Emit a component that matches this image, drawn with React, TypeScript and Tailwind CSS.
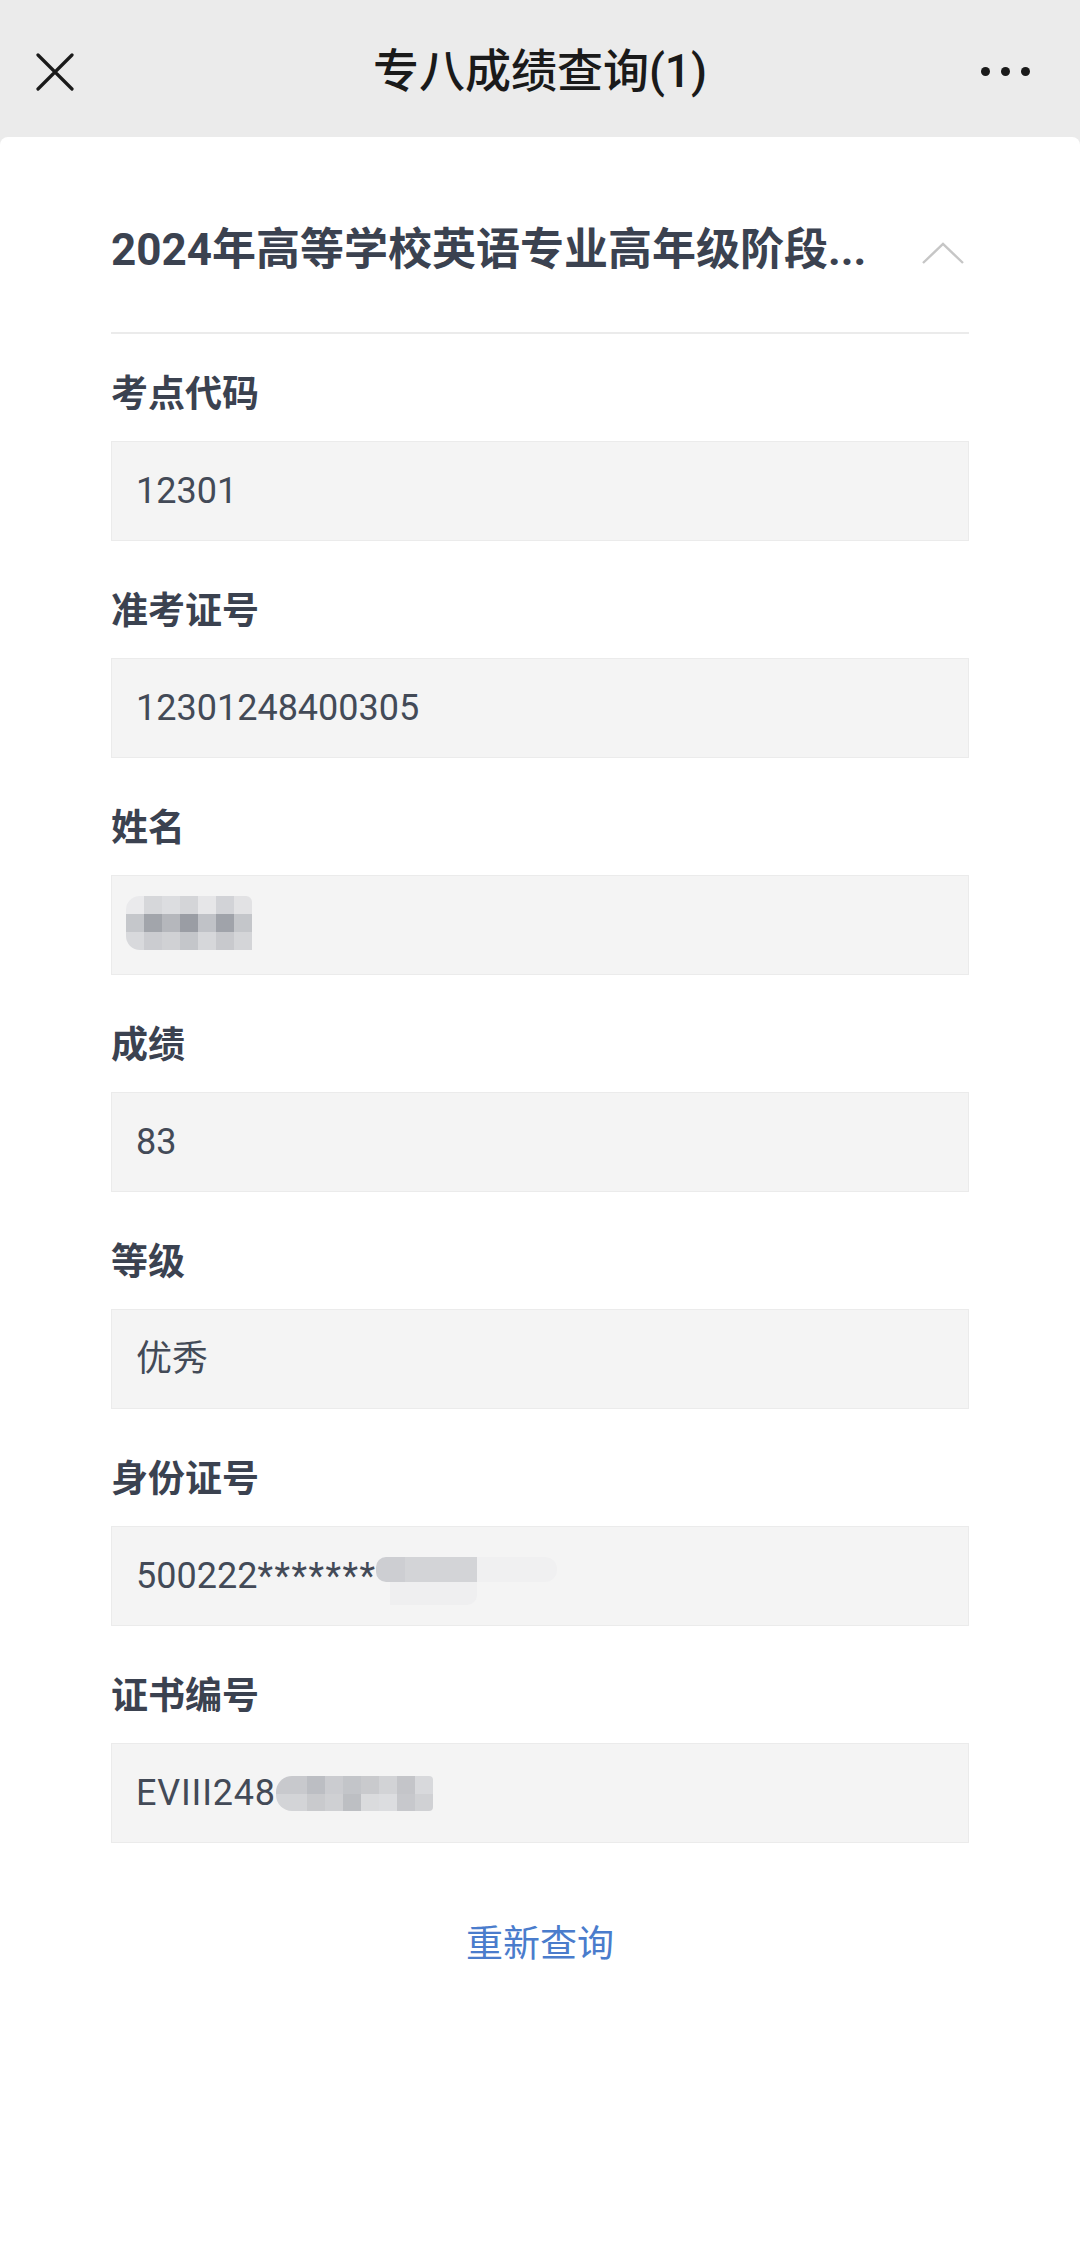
const FONT = "font-['Roboto','Noto_Sans_CJK_SC',sans-serif]";

// mosaic colours sampled from the screenshot
const NAME_ROWS = [
  ["bg-[#eaeaec]", "bg-[#d6d7da]", "bg-[#dcdde0]", "bg-[#d4d5d8]", "bg-[#e6e6e8]", "bg-[#d2d3d7]", "bg-[#e2e2e4]"],
  ["bg-[#c5c7cb]", "bg-[#a2a5ab]", "bg-[#b5b7bc]", "bg-[#9a9da4]", "bg-[#c0c2c7]", "bg-[#a0a3aa]", "bg-[#c4c6ca]"],
  ["bg-[#d8d9dc]", "bg-[#cbccd0]", "bg-[#d0d1d4]", "bg-[#c4c6ca]", "bg-[#d6d7da]", "bg-[#c8c9cd]", "bg-[#d4d5d8]"],
];

const CERT_ROWS = [
  ["bg-[#c8c9cd]", "bg-[#bcbec3]", "bg-[#cbccd0]", "bg-[#c3c5c9]", "bg-[#c9cacd]", "bg-[#d2d3d6]", "bg-[#c4c5c9]", "bg-[#d8d9dc]"],
  ["bg-[#d3d4d7]", "bg-[#c9cacd]", "bg-[#cfd0d3]", "bg-[#bdbfc3]", "bg-[#dadbdd]", "bg-[#dcdde0]", "bg-[#c7c8cc]", "bg-[#d0d1d4]"],
];

function NameBlur() {
  return (
    <div className="flex flex-col rounded-l-[14px] rounded-tr-[6px] overflow-hidden -mt-[4px] -ml-[10px]">
      {NAME_ROWS.map((row, i) => (
        <div key={i} className="flex">
          {row.map((c, j) => (
            <div key={j} className={`w-[18px] h-[18px] ${c}`} />
          ))}
        </div>
      ))}
    </div>
  );
}

function IdBlur() {
  return (
    <div className="flex flex-col mt-[5px]">
      <div className="flex">
        <div className="w-[29px] h-[25px] bg-[#cdced2] rounded-l-[10px]" />
        <div className="w-[72px] h-[25px] bg-[#d3d4d7]" />
        <div className="w-[80px] h-[25px] bg-[#f0f0f1] rounded-r-[12px]" />
      </div>
      <div className="ml-[14px] w-[87px] h-[23px] bg-[#efeff0] rounded-br-[10px]" />
    </div>
  );
}

function CertBlur() {
  return (
    <div className="flex flex-col rounded-l-[16px] rounded-r-[4px] overflow-hidden">
      {CERT_ROWS.map((row, i) => (
        <div key={i} className="flex">
          {row.map((c, j) => (
            <div key={j} className={`${j === 0 ? "w-[31px]" : "w-[18px]"} ${i === 0 ? "h-[18px]" : "h-[17px]"} ${c}`} />
          ))}
        </div>
      ))}
    </div>
  );
}

function Field({ label, children }: { label: string; children: React.ReactNode }) {
  return (
    <div className="flex flex-col mb-[44px]">
      <div className="h-[48px] leading-[54px] text-[37px] font-semibold text-[#3b4250]">{label}</div>
      <div className="mt-[25px] h-[100px] bg-[#f4f4f4] border border-[#ebebeb] flex items-center pl-[24px] text-[36px] text-[#434a57]">
        {children}
      </div>
    </div>
  );
}

export default function App() {
  return (
    <div className={`w-[1080px] min-h-[2242px] bg-[#ebebeb] flex flex-col ${FONT}`}>
      {/* top bar */}
      <div className="h-[137px] flex items-center pt-[6px]">
        <div className="w-[160px] pl-[36px]">
          <svg width="38" height="38" viewBox="0 0 38 38">
            <path d="M2 2 L36 36 M36 2 L2 36" stroke="#1a1a1a" strokeWidth="3.2" strokeLinecap="round" />
          </svg>
        </div>
        <div className="flex-1 text-center text-[46px] font-medium text-[#1a1a1a]">专八成绩查询(1)</div>
        <div className="w-[160px] flex justify-end pr-[50px] gap-[11px]">
          <div className="w-[9px] h-[9px] rounded-full bg-[#1a1a1a]" />
          <div className="w-[9px] h-[9px] rounded-full bg-[#1a1a1a]" />
          <div className="w-[9px] h-[9px] rounded-full bg-[#1a1a1a]" />
        </div>
      </div>

      {/* card */}
      <div className="flex-1 bg-white rounded-t-[8px] px-[111px]">
        <div className="pt-[83px] pb-[52px] border-b-2 border-[#ebebeb] flex items-center justify-between">
          <div className="h-[60px] leading-[60px] text-[44px] font-bold text-[#3b4250] whitespace-nowrap">
            2024年高等学校英语专业高年级阶段...
          </div>
          <svg width="44" height="24" viewBox="0 0 44 24" className="mr-[4px] mt-[5px]">
            <polyline points="2,22 22,3 42,22" fill="none" stroke="#c6c6c6" strokeWidth="2.4" />
          </svg>
        </div>

        <div className="mt-[34px] flex flex-col">
          <Field label="考点代码">12301</Field>
          <Field label="准考证号">12301248400305</Field>
          <Field label="姓名">
            <NameBlur />
          </Field>
          <Field label="成绩">83</Field>
          <Field label="等级">优秀</Field>
          <Field label="身份证号">
            <div className="flex items-start h-[48px] leading-[48px]">
              <span>500222</span>
              <span className="tracking-[1.5px]">*******</span>
              <IdBlur />
            </div>
          </Field>
          <Field label="证书编号">
            <span className="tracking-[0.8px]">EVIII248</span>
            <CertBlur />
          </Field>
        </div>

        <div className="mt-[33px] text-center h-[50px] leading-[50px] text-[37px] text-[#4a7ccc]">重新查询</div>
      </div>
    </div>
  );
}
